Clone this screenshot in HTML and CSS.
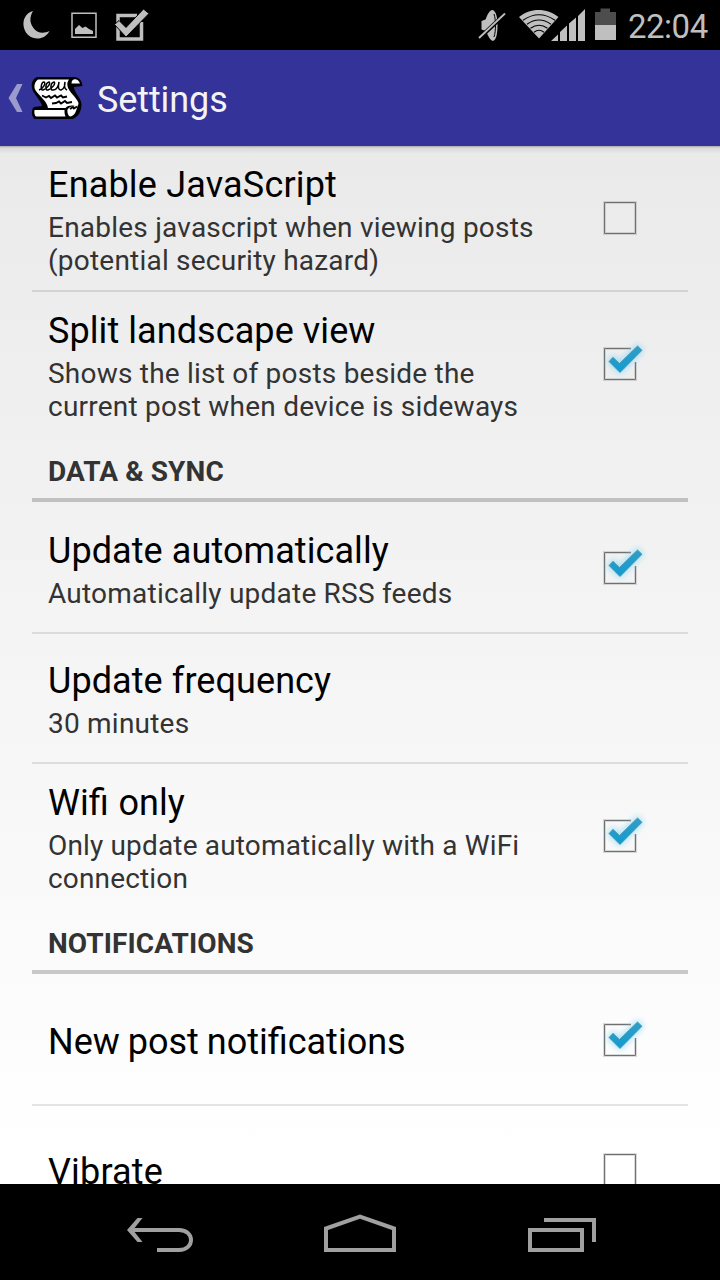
FILE: index.html
```
<!DOCTYPE html>
<html lang="en">
<head>
<meta charset="utf-8">
<title>Settings</title>
<link rel="stylesheet" href="styles.css">
</head>
<body>
<svg class="defs" width="0" height="0">
  <defs>
    <linearGradient id="tick" x1="0" y1="0" x2="0" y2="1"><stop offset="0" stop-color="#2f9fc6"/><stop offset="1" stop-color="#129bd2"/></linearGradient>
    <filter id="glow" x="-50%" y="-50%" width="200%" height="200%"><feGaussianBlur stdDeviation="3"/></filter>
    <symbol id="box-off" viewBox="0 0 64 64">
      <path d="M16.5 16.5h31v31h-31z" fill="none" stroke="#999" stroke-opacity=".35" stroke-width="3"/>
      <path d="M16.5 16.5h31v31h-31z" fill="none" stroke="#707070"/>
    </symbol>
    <symbol id="box-on" viewBox="0 0 64 64">
      <path d="M43 16.500H16.500v31h31V30" fill="none" stroke="#999" stroke-opacity=".35" stroke-width="3"/>
      <path d="M43 16.500H16.500v31h31V30" fill="none" stroke="#707070"/>
      <path d="M20.500 29.500l5-5 6 6 18-17 4.500 4.500L32 40.500z" fill="#7fd4f5" stroke="#7fd4f5" stroke-width="3" opacity=".65" filter="url(#glow)"/>
      <path d="M21 29.500l4-4.200 6.500 6.200 18-17.500 4.500 4.300L32 40.500z" fill="url(#tick)" stroke="#4791aa" stroke-width=".8"/>
    </symbol>
  </defs>
</svg>
<div class="screen">
  <div class="statusbar">
    <svg class="status-icons" width="150" height="50" viewBox="0 0 150 50" fill="#bfbfbf">
      <path d="M33 11C25 13 22 21 24 28c2 8 10 12 17 10 4-1 7-4 8.500-7-6 3-13 2-16-3-4-5-4-11-.5-17z"/>
      <path d="M72 13.200h24v24H72z" fill="none" stroke="#bfbfbf" stroke-width="1.500"/>
      <path d="M75 34v-5l4-4 3.500 3 3-1.500 3.500 2.500 4 2v3z"/>
      <path d="M137 15.500h-19V39h23.500V22" fill="none" stroke="#bfbfbf" stroke-width="3.500"/>
      <path d="M114.500 24.500l4.500-4 7 7L143.500 9l5.500 4.500-23 23.500z" stroke="#000" stroke-width="1"/>
    </svg>
    <div class="status-right">
      <svg width="150" height="50" viewBox="470 0 150 50" fill="#bfbfbf">
        <path d="M481.500 21l4-1.500c2-5 4-9.500 7-9.500 3.500 1 5 7 5 15s-1 15-4.500 16c-3-1-5-5-7-10l-4.500-1.500z"/>
        <path d="M494 14c2 6 2 17 0 23" fill="none" stroke="#000" stroke-width="1"/>
        <path d="M478.500 39L505 14" stroke="#000" stroke-width="4"/>
        <path d="M479 38l26-24.500" stroke="#bfbfbf" stroke-width="1.800"/>
        <path d="M519 17c11-9.500 28-9.500 39.500 0L539 38.500z"/>
        <g fill="none" stroke="#000" stroke-width="1.100"><path d="M523 20.300q16-11 32 0"/><path d="M527 24.300q12-8.500 24 0"/><path d="M530.500 28.300q8.500-6 17 0"/><path d="M534 32.300q5-4 10 0"/></g>
        <path d="M551 41l7-6.500V41zM560 41v-9l7-6.500V41zM569 41V23.500l7-6V41zM578 41V16l7-7v32z"/>
        <path d="M595 12h5.500V8.500h9.500V12h6v13h-21z" fill="#4d4d4d"/><path d="M595 25h21v15h-21z"/>
      </svg>
      <span class="clock">22:04</span>
    </div>
  </div>
  <div class="actionbar">
    <svg width="96" height="96" viewBox="0 50 96 96">
      <path d="M17 84h5.500l-6.500 14 6.500 14H17L8.500 98z" fill="#9b9acd"/>
      <path d="M37 77h38c5 1 7 4 7.500 9l-8.500 1c0 5 7 11 7.500 17 0 7-3 13-9 15H35c-4-2-4-10-1-12l8-1c-1-6-9-12-10-18-1-6 1-9 5-11z"/>
      <path d="M38 79.500h31c-1.500 2-2 4-1.500 6.500 1 6 9 11 11 17 0 2-1 3-2 4-3-2-8-2-11 1H48c-1-8-12-14-13.500-20-.5-4 1-6.500 3.500-8.500z" fill="#fff"/>
      <path d="M71.500 83.500c0-6 7-5 8.500 0zM34.500 110h30c0 3 0 4 1 6.500H36c-1.500-1-2-4-1.500-6.500zM67.500 109.500c3-4 7-3 10-4-1 6-3 10-7 11-2 0-3.500-3.500-3-7z" fill="#fff"/>
      <path d="M39 90c5-2 7-7 5-8-3 0-4 9-1 8 5-2 8-7 6-8-4 1-4 9-1 8 5-2 8-7 6-8-4 1-4 9-1 8 4 0 6-5 6-8-1 4-1 8 2 8 3-1 4-5 4-8-1 4 0 7 2 8" fill="none" stroke="#000" stroke-width="1.500"/>
      <path d="M42 95.500l4 2 3-1.500 2 2 4-2.500 2 2 4-2 2 2 4-1M52 103.500l4-.5 3-1.500 2 2 4-2.500 2 2 5-1M70 109l3-2 1 1.500 3-2" fill="none" stroke="#000" stroke-width="1.900"/>
    </svg>
    <h1 class="title">Settings</h1>
  </div>
  <main class="list">
    <div class="row tall"><div class="text"><div class="name wide">Enable JavaScript</div><div class="desc">Enables javascript when viewing posts<br>(potential security hazard)</div></div><svg class="check"><use href="#box-off"/></svg></div>
    <div class="row tall divided"><div class="text"><div class="name">Split landscape view</div><div class="desc">Shows the list of posts beside the<br>current post when device is sideways</div></div><svg class="check"><use href="#box-on"/></svg></div>
    <h2 class="section">DATA &amp; SYNC</h2>
    <div class="row"><div class="text"><div class="name">Update automatically</div><div class="desc">Automatically update RSS feeds</div></div><svg class="check"><use href="#box-on"/></svg></div>
    <div class="row divided"><div class="text"><div class="name">Update frequency</div><div class="desc">30 minutes</div></div></div>
    <div class="row tall divided"><div class="text"><div class="name ligature">Wifi only</div><div class="desc narrow">Only update automatically with a WiFi<br>connection</div></div><svg class="check"><use href="#box-on"/></svg></div>
    <h2 class="section">NOTIFICATIONS</h2>
    <div class="row"><div class="text"><div class="name ligature tight">New post notifications</div></div><svg class="check"><use href="#box-on"/></svg></div>
    <div class="row divided"><div class="text"><div class="name wide">Vibrate</div></div><svg class="check"><use href="#box-off"/></svg></div>
  </main>
  <nav class="navbar">
    <svg width="720" height="96" viewBox="0 1184 720 96" fill="none" stroke="#a0a0a0" stroke-width="4">
      <path d="M157 1250h22c16 0 16-20 0-20h-48"/>
      <path d="M137.500 1218h5l-9.500 12 9.500 12h-5L127 1230z" fill="#a0a0a0" stroke="none"/>
      <path d="M326 1250v-21.500l34-12 34 12v21.500z"/>
      <path d="M530 1230h52v20h-52zM544 1220h50v22"/>
    </svg>
  </nav>
</div>
</body>
</html>
```
FILE: styles.css
```
body { margin: 0; background: #000; font-family: Roboto, "Noto Sans", sans-serif; }
.defs { display: block; }
.screen { width: 720px; height: 1280px; display: flex; flex-direction: column; overflow: hidden; }
.statusbar { height: 50px; flex: none; display: flex; justify-content: space-between; background: #000; }
.status-right { display: flex; width: 250px; }
.clock { font-size: 33px; line-height: 53px; letter-spacing: -.5px; color: #bfbfbf; margin-left: 8px; }
.actionbar { height: 96px; flex: none; display: flex; align-items: center; background: #333399; }
.title { margin: 0; padding: 3px 0 0 1px; font-size: 36px; font-weight: 400; line-height: 42px; letter-spacing: -.1px; color: #f3f3f3; }
.list { flex: 1; min-height: 0; overflow: hidden; padding: 0 32px; background: linear-gradient(rgba(0, 0, 0, .28), rgba(0, 0, 0, .07) 2px, transparent 8px), linear-gradient(#eaeaea, #fff 97%); }
.row { display: flex; align-items: center; justify-content: space-between; height: 128px; margin-top: 2px; padding: 0 36px 0 16px; }
.row.tall { height: 144px; }
.row.tall:first-child { margin-top: 0; }
.row.divided { margin-top: 0; border-top: 2px solid rgba(0, 0, 0, .1); }
.text { padding-top: 4px; white-space: nowrap; }
.name { font-size: 36px; line-height: 42px; letter-spacing: .08px; color: #000; }
.name.wide { letter-spacing: .18px; }
.name.ligature { letter-spacing: normal; word-spacing: 1px; }
.name.tight { word-spacing: -1px; }
.desc { margin-top: 5px; font-size: 28px; line-height: 33px; letter-spacing: .22px; color: #333; }
.desc.narrow { letter-spacing: .16px; }
.check { width: 64px; height: 64px; flex: none; overflow: visible; }
.section { margin: 0; height: 62px; padding: 0 16px; border-bottom: 4px solid rgba(0, 0, 0, .2); font-size: 28px; font-weight: 700; line-height: 72px; letter-spacing: .1px; color: #333; }
.navbar { height: 96px; flex: none; background: #000; }
.navbar svg { display: block; }
```
